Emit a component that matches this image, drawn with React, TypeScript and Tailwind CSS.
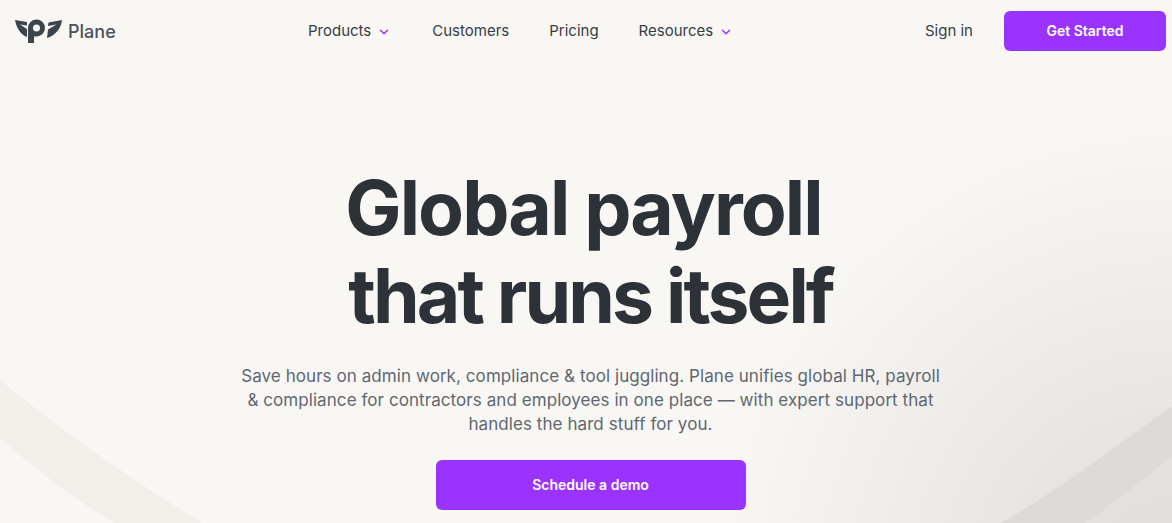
import React from 'react';
import { ChevronDown } from 'lucide-react';

const PlaneLogo: React.FC = () => (
  <svg width="48" height="25" viewBox="0 0 48 25" fill="#3d454c">
    <path d="M0 1 L12 3 L12 6.500 L5 5.500 L12 10 L12 18 C5.500 15.500 1.500 9 0 1 Z" />
    <path d="M13 9 A8.500 8.500 0 1 1 21.500 17.500 L19 17.500 L19 24 L13 24 Z M18 9 A3.500 3.500 0 1 0 25 9 A3.500 3.500 0 1 0 18 9 Z" fillRule="evenodd" />
    <path d="M47 1 L33.500 3.500 L33 7 L41.500 5.500 L33 10.500 L32 19 C40 16.500 46 10 47 1 Z" />
  </svg>
);

const NavLink: React.FC<{ label: string; hasMenu?: boolean }> = ({ label, hasMenu }) => (
  <a className="flex items-center gap-[6px] text-[15px] text-[#363d44]">
    {label}
    {hasMenu && <ChevronDown size={14} strokeWidth={2.5} className="text-[#9b33ff] mt-[2px] mr-[1px]" />}
  </a>
);

const App: React.FC = () => {
  return (
    <div className="relative h-[523px] overflow-hidden bg-[#f8f7f4] font-['Inter',sans-serif]">
      {/* arc and grey wash behind the hero */}
      <svg className="absolute inset-0" width="1172" height="523" viewBox="0 0 1172 523">
        <defs>
          <radialGradient id="wash" cx="1172" cy="580" r="460" gradientUnits="userSpaceOnUse">
            <stop offset="0" stopColor="#dddcd9" />
            <stop offset="0.55" stopColor="#ecebe9" />
            <stop offset="1" stopColor="#f8f7f4" />
          </radialGradient>
        </defs>
        <rect width="1172" height="523" fill="url(#wash)" />
        <path d="M0 380 C60 430 130 478 202 523 L114 523 C72 498 34 468 0 438 Z" fill="#f1efea" />
        <path d="M1172 406 C1110 450 1060 490 1000 523 L1085 523 C1115 503 1145 478 1172 456 Z" fill="#dddbd7" />
      </svg>

      <div className="relative flex flex-col items-center">
        <header className="w-full h-[62px] flex items-center pl-[15px] pr-[6px]">
          <div className="flex items-center gap-[5px] w-[293px]">
            <PlaneLogo />
            <span className="text-[18px] font-medium text-[#4b5259] mt-[1px]">Plane</span>
          </div>
          <nav className="flex items-center gap-[40px]">
            <NavLink label="Products" hasMenu />
            <NavLink label="Customers" />
            <NavLink label="Pricing" />
            <NavLink label="Resources" hasMenu />
          </nav>
          <div className="ml-auto flex items-center gap-[31px]">
            <a className="text-[15px] text-[#363d44]">Sign in</a>
            <button className="w-[162px] h-[40px] pb-[2px] rounded-[6px] bg-[#9b33ff] text-white text-[14px] font-semibold">
              Get Started
            </button>
          </div>
        </header>

        <div className="flex flex-col items-center pl-[9px]">
          <h1 className="mt-[102px] text-center text-[75px] leading-[88px] font-bold text-[#2c3238]">
            <span className="block tracking-[-1.9px] mr-[14px]">Global payroll</span>
            <span className="block tracking-[-2.9px]">that runs itself</span>
          </h1>

          <p className="mt-[24px] w-[720px] text-center text-[17px] leading-[24px] tracking-[0.07px] text-[#5f6771]">
            Save hours on admin work, compliance &amp; tool juggling. Plane unifies global HR, payroll
            <br />
            &amp; compliance for contractors and employees in one place — with expert support that
            <br />
            handles the hard stuff for you.
          </p>

          <button className="mt-[24px] w-[310px] h-[50px] pb-[2px] rounded-[6px] bg-[#9b33ff] text-white text-[14px] font-semibold">
            Schedule a demo
          </button>
        </div>
      </div>
    </div>
  );
};

export default App;
